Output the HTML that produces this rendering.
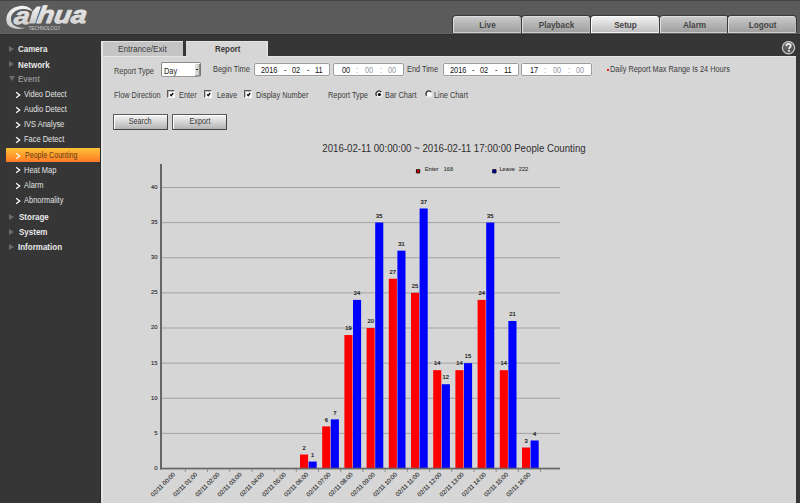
<!DOCTYPE html>
<html><head><meta charset="utf-8">
<style>
*{margin:0;padding:0;box-sizing:border-box}
html,body{width:800px;height:503px;overflow:hidden;background:#363636;font-family:"Liberation Sans",sans-serif}
.a{position:absolute;white-space:nowrap;line-height:1}
#hdr{position:absolute;left:0;top:0;width:800px;height:34px;background:#5b5b5b;border-top:1px solid #444;box-shadow:inset 0 -1px 0 #646464,0 1px 0 #2c2c2c}
.mt{position:absolute;top:15px;height:18px;width:70px;border-radius:4px 4px 0 0;background:linear-gradient(#cbcbcb,#9d9d9d);border:1px solid #393939;border-bottom:none;box-shadow:inset 1px 1px 0 #dedede,inset -1px 0 0 #b8b8b8,inset 0 -1px 0 #cfcfcf;font-weight:bold;font-size:8.2px;color:#454545;text-align:center;line-height:20px;padding-left:1px}
.mt.on{background:linear-gradient(#f4f4f4,#bdbdbd);box-shadow:inset 1px 1px 0 #fff,inset -1px 0 0 #ddd,inset 0 -1px 0 #f4f4f4}
.side{color:#e8e8e8;font-weight:bold;font-size:8.3px;transform:scaleX(0.965);transform-origin:0 0}
.sub{color:#e2e2e2;font-size:8.3px;transform:scaleX(0.9);transform-origin:0 0}
.tri{position:absolute;width:0;height:0;border-top:3px solid transparent;border-bottom:3px solid transparent;border-left:5px solid #6c6c6c}
.chev{position:absolute;width:4px;height:4px;border-right:1.3px solid #eee;border-top:1.3px solid #eee;transform:rotate(45deg)}
#panel{position:absolute;left:101px;top:56px;width:695px;height:447px;background:#d6d6d6;border-left:2px solid #e4e4e4;border-top:1px solid #e4e4e4;box-shadow:-1px 0 0 #2a2a2a}
.lbl{font-size:8.3px;color:#3c3c3c;transform:scaleX(0.887);transform-origin:0 0}
.box{position:absolute;background:#fff;border:1px solid #9c9c9c;border-radius:2px;box-shadow:0 0 0 0.5px #e2e2e2}
.cb{position:absolute;width:8px;height:8px;background:#fff;border-top:1.6px solid #5a5a5a;border-left:1.6px solid #5a5a5a;border-right:1px solid #f8f8f8;border-bottom:1px solid #f8f8f8;box-shadow:inset 1px 1px 0 #bbb}
.btn{position:absolute;height:16px;width:54.5px;border:1px solid #5a5a5a;border-right-color:#444;border-bottom-color:#444;border-radius:1px;background:linear-gradient(#f6f6f6,#b4b4b4);box-shadow:inset 1px 1px 0 #fff;font-size:8.3px;color:#3a3a3a;text-align:center;line-height:13.2px}
.btn span{display:inline-block;transform:scaleX(0.87)}
</style></head><body>
<div id="hdr"></div>
<!-- logo -->
<svg class="a" style="left:0;top:0" width="100" height="33" viewBox="0 0 100 33">
  <defs><linearGradient id="lg" x1="0" y1="0" x2="0" y2="1"><stop offset="0" stop-color="#f4f4f4"/><stop offset="1" stop-color="#c9c9c9"/></linearGradient></defs>
  <path d="M26 27.6 C22 29.6,13.5 29.8,9 26 C5.5 23,5.6 16.5,8.6 12.3 C12 7.6,18.5 5.6,24 5.9 C28.2 6.2,31.2 8.3,32.6 11.4 C30 9.9,27 8.8,23 8.9 C17.5 9,12.6 11.8,11.2 16.5 C10 21,12.2 24.8,16.2 26.6 C19.5 27.9,23.2 28,26 27.6 Z" fill="url(#lg)"/>
  <g transform="translate(0,23.6) skewX(-8)"><text x="13.3" y="0" font-family="Liberation Sans" font-weight="bold" font-style="italic" font-size="23.5" fill="url(#lg)" stroke="#e2e2e2" stroke-width="0.6" stroke-linejoin="round" textLength="15.6" lengthAdjust="spacingAndGlyphs">a</text></g>
  <path d="M36.9 6.4 L40.8 6.4 L35.1 23.6 L28.8 23.6 C30.5 18,31.8 13.5,32.6 11.2 Z" fill="url(#lg)"/>
  <g transform="translate(36.2,23.4) skewX(-9)"><text x="0" y="0" font-family="Liberation Sans" font-weight="bold" font-style="italic" font-size="24.3" fill="url(#lg)" stroke="#e0e0e0" stroke-width="0.9" stroke-linejoin="round" textLength="49.5" lengthAdjust="spacingAndGlyphs">hua</text></g>
  <text x="28.5" y="29.7" font-family="Liberation Sans" font-size="4.9" fill="#cfcfcf" textLength="32" lengthAdjust="spacingAndGlyphs">TECHNOLOGY</text>
</svg>
<div class="mt" style="left:452px">Live</div>
<div class="mt" style="left:521px">Playback</div>
<div class="mt on" style="left:590px">Setup</div>
<div class="mt" style="left:659px">Alarm</div>
<div class="mt" style="left:727px">Logout</div>

<!-- sidebar -->
<div class="tri" style="left:9px;top:46.0px"></div><div class="a side" style="left:18px;top:45.2px">Camera</div>
<div class="tri" style="left:9px;top:61.0px"></div><div class="a side" style="left:18px;top:60.5px">Network</div>
<div class="a" style="left:9px;top:75.8px;width:0;height:0;border-left:3.1px solid transparent;border-right:3.1px solid transparent;border-top:5.6px solid #6c6c6c"></div><div class="a side" style="left:18px;top:75.2px;color:#8e8e8e">Event</div>
<svg class="a" style="left:14px;top:90.75px" width="8" height="8" viewBox="0 0 8 8"><path d="M2.1 1.3 L5.7 4 L2.1 6.7" stroke="#ffffff" stroke-width="1.25" fill="none"/></svg><div class="a sub" style="left:24.4px;top:90.0px">Video Detect</div>
<svg class="a" style="left:14px;top:105.65px" width="8" height="8" viewBox="0 0 8 8"><path d="M2.1 1.3 L5.7 4 L2.1 6.7" stroke="#ffffff" stroke-width="1.25" fill="none"/></svg><div class="a sub" style="left:24.4px;top:104.9px">Audio Detect</div>
<svg class="a" style="left:14px;top:120.95px" width="8" height="8" viewBox="0 0 8 8"><path d="M2.1 1.3 L5.7 4 L2.1 6.7" stroke="#ffffff" stroke-width="1.25" fill="none"/></svg><div class="a sub" style="left:24.4px;top:120.2px">IVS Analyse</div>
<svg class="a" style="left:14px;top:135.95px" width="8" height="8" viewBox="0 0 8 8"><path d="M2.1 1.3 L5.7 4 L2.1 6.7" stroke="#ffffff" stroke-width="1.25" fill="none"/></svg><div class="a sub" style="left:24.4px;top:135.2px">Face Detect</div>
<div class="a" style="left:6px;top:148px;width:94px;height:14px;background:linear-gradient(#ffc236,#ff7a26)"></div>
<svg class="a" style="left:14px;top:151.85px" width="8" height="8" viewBox="0 0 8 8"><path d="M2.1 1.3 L5.7 4 L2.1 6.7" stroke="#fff6e8" stroke-width="1.25" fill="none"/></svg><div class="a sub" style="left:24.7px;top:151.1px;color:#5a3a12;transform:scaleX(0.855)">People Counting</div>
<svg class="a" style="left:14px;top:166.45px" width="8" height="8" viewBox="0 0 8 8"><path d="M2.1 1.3 L5.7 4 L2.1 6.7" stroke="#ffffff" stroke-width="1.25" fill="none"/></svg><div class="a sub" style="left:24.4px;top:165.8px">Heat Map</div>
<svg class="a" style="left:14px;top:181.75px" width="8" height="8" viewBox="0 0 8 8"><path d="M2.1 1.3 L5.7 4 L2.1 6.7" stroke="#ffffff" stroke-width="1.25" fill="none"/></svg><div class="a sub" style="left:24.4px;top:181.0px">Alarm</div>
<svg class="a" style="left:14px;top:197.05px" width="8" height="8" viewBox="0 0 8 8"><path d="M2.1 1.3 L5.7 4 L2.1 6.7" stroke="#ffffff" stroke-width="1.25" fill="none"/></svg><div class="a sub" style="left:24.4px;top:196.3px">Abnormality</div>
<div class="tri" style="left:9px;top:213.5px"></div><div class="a side" style="left:18.5px;top:213.0px">Storage</div>
<div class="tri" style="left:9px;top:228.5px"></div><div class="a side" style="left:18.5px;top:228.0px">System</div>
<div class="tri" style="left:9px;top:243.5px"></div><div class="a side" style="left:18px;top:242.7px">Information</div>

<!-- panel -->
<div id="panel"></div>
<div class="a" style="left:101px;top:41px;width:82px;height:15px;background:#c4c4c4;border-top:1px solid #e2e2e2;border-left:2px solid #e4e4e4"></div>
<div class="a lbl" style="left:118px;top:45.6px;font-size:8.2px;transform:none">Entrance/Exit</div>
<div class="a" style="left:185.5px;top:41px;width:82.5px;height:16px;background:#d6d6d6;border-top:1px solid #e4e4e4;box-shadow:inset -1.5px 0 0 #e2e2e2"></div>
<div class="a" style="left:214.5px;top:44.9px;font-size:8.3px;font-weight:bold;color:#3a3a3a;transform:scaleX(0.95);transform-origin:0 0">Report</div>

<!-- help -->
<svg class="a" style="left:781px;top:41px" width="15" height="15" viewBox="0 0 15 15">
  <defs><radialGradient id="hg" cx="0.4" cy="0.35" r="0.7"><stop offset="0" stop-color="#6e6e6e"/><stop offset="1" stop-color="#4a4a4a"/></radialGradient></defs>
  <circle cx="7.5" cy="6.7" r="6.1" fill="url(#hg)" stroke="#bdbdbd" stroke-width="1.4"/>
  <path d="M5.3 5.1 C5.3 3.6,6.3 2.9,7.6 2.9 C8.9 2.9,9.8 3.7,9.8 4.9 C9.8 6.2,8 6.5,8 7.9" stroke="#f2f2f2" stroke-width="1.6" fill="none"/>
  <rect x="7.1" y="9" width="1.8" height="1.7" fill="#f2f2f2"/>
</svg>
<!-- row1 -->
<div class="a lbl" style="left:113.5px;top:67.3px">Report Type</div>
<div class="a" style="left:161px;top:62px;width:40px;height:14.5px;background:#fff;border:1px solid #8a8a8a;border-right-color:#777;border-bottom-color:#999;border-radius:2px"></div>
<div class="a" style="left:194.8px;top:63.5px;width:5px;height:12px;background:linear-gradient(90deg,#e2e0da,#cfccc4);border-right:1px solid #888;border-bottom:1px solid #999"></div>
<div class="a" style="left:196.3px;top:68.8px;width:2px;height:1.6px;background:#000;border-radius:1px"></div>
<div class="a lbl" style="left:163.8px;top:67.3px;color:#222">Day</div>
<div class="a lbl" style="left:213px;top:64.9px">Begin Time</div>
<div class="box" style="left:254.4px;top:63.2px;width:76px;height:13.3px"></div>
<div class="a lbl" style="left:261px;top:65.7px;color:#111">2016</div>
<div class="a lbl" style="left:283.5px;top:65.7px;color:#111">-</div>
<div class="a lbl" style="left:291.7px;top:65.7px;color:#111">02</div>
<div class="a lbl" style="left:307px;top:65.7px;color:#111">-</div>
<div class="a lbl" style="left:315.3px;top:65.7px;color:#111">11</div>
<div class="box" style="left:333px;top:63.2px;width:71px;height:13.3px"></div>
<div class="a lbl" style="left:341.7px;top:65.7px;color:#111">00</div>
<div class="a lbl" style="left:356px;top:65.7px;color:#8e98a2">:</div>
<div class="a lbl" style="left:364.5px;top:65.7px;color:#8e98a2">00</div>
<div class="a lbl" style="left:379.7px;top:65.7px;color:#8e98a2">:</div>
<div class="a lbl" style="left:388.3px;top:65.7px;color:#8e98a2">00</div>
<div class="a lbl" style="left:407px;top:64.9px">End Time</div>
<div class="box" style="left:442.5px;top:63.2px;width:76.3px;height:13.3px"></div>
<div class="a lbl" style="left:449.5px;top:65.7px;color:#111">2016</div>
<div class="a lbl" style="left:471.8px;top:65.7px;color:#111">-</div>
<div class="a lbl" style="left:479.8px;top:65.7px;color:#111">02</div>
<div class="a lbl" style="left:495px;top:65.7px;color:#111">-</div>
<div class="a lbl" style="left:503.5px;top:65.7px;color:#111">11</div>
<div class="box" style="left:521.2px;top:63.2px;width:71.3px;height:13.3px"></div>
<div class="a lbl" style="left:530.4px;top:65.7px;color:#111">17</div>
<div class="a lbl" style="left:544.2px;top:65.7px;color:#8e98a2">:</div>
<div class="a lbl" style="left:552.8px;top:65.7px;color:#8e98a2">00</div>
<div class="a lbl" style="left:568px;top:65.7px;color:#8e98a2">:</div>
<div class="a lbl" style="left:576.3px;top:65.7px;color:#8e98a2">00</div>
<div class="a" style="left:607px;top:69px;width:2px;height:1.5px;background:#e02020"></div>
<div class="a lbl" style="left:609.6px;top:64.7px">Daily Report Max Range Is 24 Hours</div>
<!-- row2 -->
<div class="a lbl" style="left:113.5px;top:90.6px">Flow Direction</div>
<div class="cb" style="left:167px;top:90px"></div><svg class="a" style="left:167px;top:90px" width="8" height="8"><path d="M3.1 4.4 L4.2 5.7 L6.2 3.0" stroke="#000" stroke-width="1.3" fill="none"/></svg>
<div class="a lbl" style="left:178.7px;top:90.6px">Enter</div>
<div class="cb" style="left:204px;top:90px"></div><svg class="a" style="left:204px;top:90px" width="8" height="8"><path d="M3.1 4.4 L4.2 5.7 L6.2 3.0" stroke="#000" stroke-width="1.3" fill="none"/></svg>
<div class="a lbl" style="left:216.5px;top:90.6px">Leave</div>
<div class="cb" style="left:244px;top:90px"></div><svg class="a" style="left:244px;top:90px" width="8" height="8"><path d="M3.1 4.4 L4.2 5.7 L6.2 3.0" stroke="#000" stroke-width="1.3" fill="none"/></svg>
<div class="a lbl" style="left:256.3px;top:90.6px">Display Number</div>
<div class="a lbl" style="left:327.5px;top:90.6px">Report Type</div>
<svg class="a" style="left:374px;top:89px" width="10" height="10" viewBox="0 0 10 10"><circle cx="5.3" cy="5.4" r="3.4" fill="#e8e8e8"/><circle cx="5.3" cy="5.4" r="2.4" fill="#fff"/><path d="M2.7 6.8 A2.75 2.75 0 0 1 7.3 3.2" stroke="#2a2a2a" stroke-width="1.3" fill="none"/><circle cx="5.4" cy="5.5" r="1.6" fill="#000"/></svg>
<div class="a lbl" style="left:384.8px;top:90.6px">Bar Chart</div>
<svg class="a" style="left:423.5px;top:89px" width="10" height="10" viewBox="0 0 10 10"><circle cx="5.2" cy="5.25" r="3.4" fill="#e8e8e8"/><circle cx="5.2" cy="5.25" r="2.3" fill="#fff"/><path d="M2.6 6.65 A2.75 2.75 0 0 1 7.2 3.05" stroke="#2a2a2a" stroke-width="1.3" fill="none"/></svg>
<div class="a lbl" style="left:433.8px;top:90.6px">Line Chart</div>
<!-- row3 -->
<div class="btn" style="left:113px;top:114px"><span>Search</span></div>
<div class="btn" style="left:172.3px;top:114px"><span>Export</span></div>

<!-- chart -->
<svg class="a" style="left:0;top:0" width="800" height="503" viewBox="0 0 800 503" font-family="Liberation Sans" stroke-linejoin="round">
<g transform="translate(322.3,151.9) scale(0.94,1)"><text x="0" y="0" font-size="10.3" fill="#2e2e2e">2016-02-11 00:00:00 ~ 2016-02-11 17:00:00 People Counting</text></g>
<rect x="416.4" y="169.7" width="3.3" height="3.2" fill="#e00" stroke="#1a0808" stroke-width="1"/>
<text x="424.7" y="171.1" font-size="5.7" fill="#3c3c3c" stroke="#3c3c3c" stroke-width="0.12">Enter</text><text x="443.7" y="171.1" font-size="5.7" fill="#3c3c3c" stroke="#3c3c3c" stroke-width="0.12">168</text>
<rect x="492.7" y="169.7" width="3.3" height="3.2" fill="#00d" stroke="#08081a" stroke-width="1"/>
<text x="499.4" y="171.1" font-size="5.7" fill="#3c3c3c" stroke="#3c3c3c" stroke-width="0.12">Leave</text><text x="518.8" y="171.1" font-size="5.7" fill="#3c3c3c" stroke="#3c3c3c" stroke-width="0.12">222</text>
<rect x="162" y="432.88" width="398" height="1" fill="#a3a3a3"/>
<rect x="162" y="397.75" width="398" height="1" fill="#a3a3a3"/>
<rect x="162" y="362.62" width="398" height="1" fill="#a3a3a3"/>
<rect x="162" y="327.50" width="398" height="1" fill="#a3a3a3"/>
<rect x="162" y="292.38" width="398" height="1" fill="#a3a3a3"/>
<rect x="162" y="257.25" width="398" height="1" fill="#a3a3a3"/>
<rect x="162" y="222.12" width="398" height="1" fill="#a3a3a3"/>
<rect x="162" y="187.00" width="398" height="1" fill="#a3a3a3"/>
<text x="157.6" y="469.90" font-size="5.9" fill="#333" stroke="#333" stroke-width="0.15" text-anchor="end">0</text>
<text x="157.6" y="434.77" font-size="5.9" fill="#333" stroke="#333" stroke-width="0.15" text-anchor="end">5</text>
<text x="157.6" y="399.65" font-size="5.9" fill="#333" stroke="#333" stroke-width="0.15" text-anchor="end">10</text>
<text x="157.6" y="364.52" font-size="5.9" fill="#333" stroke="#333" stroke-width="0.15" text-anchor="end">15</text>
<text x="157.6" y="329.40" font-size="5.9" fill="#333" stroke="#333" stroke-width="0.15" text-anchor="end">20</text>
<text x="157.6" y="294.27" font-size="5.9" fill="#333" stroke="#333" stroke-width="0.15" text-anchor="end">25</text>
<text x="157.6" y="259.15" font-size="5.9" fill="#333" stroke="#333" stroke-width="0.15" text-anchor="end">30</text>
<text x="157.6" y="224.03" font-size="5.9" fill="#333" stroke="#333" stroke-width="0.15" text-anchor="end">35</text>
<text x="157.6" y="188.90" font-size="5.9" fill="#333" stroke="#333" stroke-width="0.15" text-anchor="end">40</text>
<rect x="300.00" y="454.54" width="8.1" height="14.06" fill="#ff0000"/>
<text x="304.05" y="449.74" font-size="5.8" fill="#1a1a1a" stroke="#1a1a1a" stroke-width="0.2" text-anchor="middle">2</text>
<rect x="308.60" y="461.57" width="8.1" height="7.03" fill="#0000ff"/>
<text x="312.65" y="456.77" font-size="5.8" fill="#1a1a1a" stroke="#1a1a1a" stroke-width="0.2" text-anchor="middle">1</text>
<rect x="322.20" y="426.42" width="8.1" height="42.18" fill="#ff0000"/>
<text x="326.25" y="421.62" font-size="5.8" fill="#1a1a1a" stroke="#1a1a1a" stroke-width="0.2" text-anchor="middle">6</text>
<rect x="330.80" y="419.39" width="8.1" height="49.21" fill="#0000ff"/>
<text x="334.85" y="414.59" font-size="5.8" fill="#1a1a1a" stroke="#1a1a1a" stroke-width="0.2" text-anchor="middle">7</text>
<rect x="344.40" y="335.03" width="8.1" height="133.57" fill="#ff0000"/>
<text x="348.45" y="330.23" font-size="5.8" fill="#1a1a1a" stroke="#1a1a1a" stroke-width="0.2" text-anchor="middle">19</text>
<rect x="353.00" y="299.88" width="8.1" height="168.72" fill="#0000ff"/>
<text x="357.05" y="295.08" font-size="5.8" fill="#1a1a1a" stroke="#1a1a1a" stroke-width="0.2" text-anchor="middle">24</text>
<rect x="366.60" y="328.00" width="8.1" height="140.60" fill="#ff0000"/>
<text x="370.65" y="323.20" font-size="5.8" fill="#1a1a1a" stroke="#1a1a1a" stroke-width="0.2" text-anchor="middle">20</text>
<rect x="375.20" y="222.55" width="8.1" height="246.05" fill="#0000ff"/>
<text x="379.25" y="217.75" font-size="5.8" fill="#1a1a1a" stroke="#1a1a1a" stroke-width="0.2" text-anchor="middle">35</text>
<rect x="388.80" y="278.79" width="8.1" height="189.81" fill="#ff0000"/>
<text x="392.85" y="273.99" font-size="5.8" fill="#1a1a1a" stroke="#1a1a1a" stroke-width="0.2" text-anchor="middle">27</text>
<rect x="397.40" y="250.67" width="8.1" height="217.93" fill="#0000ff"/>
<text x="401.45" y="245.87" font-size="5.8" fill="#1a1a1a" stroke="#1a1a1a" stroke-width="0.2" text-anchor="middle">31</text>
<rect x="411.00" y="292.85" width="8.1" height="175.75" fill="#ff0000"/>
<text x="415.05" y="288.05" font-size="5.8" fill="#1a1a1a" stroke="#1a1a1a" stroke-width="0.2" text-anchor="middle">25</text>
<rect x="419.60" y="208.49" width="8.1" height="260.11" fill="#0000ff"/>
<text x="423.65" y="203.69" font-size="5.8" fill="#1a1a1a" stroke="#1a1a1a" stroke-width="0.2" text-anchor="middle">37</text>
<rect x="433.20" y="370.18" width="8.1" height="98.42" fill="#ff0000"/>
<text x="437.25" y="365.38" font-size="5.8" fill="#1a1a1a" stroke="#1a1a1a" stroke-width="0.2" text-anchor="middle">14</text>
<rect x="441.80" y="384.24" width="8.1" height="84.36" fill="#0000ff"/>
<text x="445.85" y="379.44" font-size="5.8" fill="#1a1a1a" stroke="#1a1a1a" stroke-width="0.2" text-anchor="middle">12</text>
<rect x="455.40" y="370.18" width="8.1" height="98.42" fill="#ff0000"/>
<text x="459.45" y="365.38" font-size="5.8" fill="#1a1a1a" stroke="#1a1a1a" stroke-width="0.2" text-anchor="middle">14</text>
<rect x="464.00" y="363.15" width="8.1" height="105.45" fill="#0000ff"/>
<text x="468.05" y="358.35" font-size="5.8" fill="#1a1a1a" stroke="#1a1a1a" stroke-width="0.2" text-anchor="middle">15</text>
<rect x="477.60" y="299.88" width="8.1" height="168.72" fill="#ff0000"/>
<text x="481.65" y="295.08" font-size="5.8" fill="#1a1a1a" stroke="#1a1a1a" stroke-width="0.2" text-anchor="middle">24</text>
<rect x="486.20" y="222.55" width="8.1" height="246.05" fill="#0000ff"/>
<text x="490.25" y="217.75" font-size="5.8" fill="#1a1a1a" stroke="#1a1a1a" stroke-width="0.2" text-anchor="middle">35</text>
<rect x="499.80" y="370.18" width="8.1" height="98.42" fill="#ff0000"/>
<text x="503.85" y="365.38" font-size="5.8" fill="#1a1a1a" stroke="#1a1a1a" stroke-width="0.2" text-anchor="middle">14</text>
<rect x="508.40" y="320.97" width="8.1" height="147.63" fill="#0000ff"/>
<text x="512.45" y="316.17" font-size="5.8" fill="#1a1a1a" stroke="#1a1a1a" stroke-width="0.2" text-anchor="middle">21</text>
<rect x="522.00" y="447.51" width="8.1" height="21.09" fill="#ff0000"/>
<text x="526.05" y="442.71" font-size="5.8" fill="#1a1a1a" stroke="#1a1a1a" stroke-width="0.2" text-anchor="middle">3</text>
<rect x="530.60" y="440.48" width="8.1" height="28.12" fill="#0000ff"/>
<text x="534.65" y="435.68" font-size="5.8" fill="#1a1a1a" stroke="#1a1a1a" stroke-width="0.2" text-anchor="middle">4</text>
<rect x="160" y="164" width="2" height="305.5" fill="#666"/>
<rect x="160" y="467.7" width="400" height="1.7" fill="#666"/>
<rect x="184.75" y="469.3" width="1" height="2.6" fill="#888"/>
<rect x="206.96" y="469.3" width="1" height="2.6" fill="#888"/>
<rect x="229.17" y="469.3" width="1" height="2.6" fill="#888"/>
<rect x="251.38" y="469.3" width="1" height="2.6" fill="#888"/>
<rect x="273.59" y="469.3" width="1" height="2.6" fill="#888"/>
<rect x="295.80" y="469.3" width="1" height="2.6" fill="#888"/>
<rect x="318.01" y="469.3" width="1" height="2.6" fill="#888"/>
<rect x="340.22" y="469.3" width="1" height="2.6" fill="#888"/>
<rect x="362.43" y="469.3" width="1" height="2.6" fill="#888"/>
<rect x="384.64" y="469.3" width="1" height="2.6" fill="#888"/>
<rect x="406.85" y="469.3" width="1" height="2.6" fill="#888"/>
<rect x="429.06" y="469.3" width="1" height="2.6" fill="#888"/>
<rect x="451.27" y="469.3" width="1" height="2.6" fill="#888"/>
<rect x="473.48" y="469.3" width="1" height="2.6" fill="#888"/>
<rect x="495.69" y="469.3" width="1" height="2.6" fill="#888"/>
<rect x="517.90" y="469.3" width="1" height="2.6" fill="#888"/>
<rect x="540.11" y="469.3" width="1" height="2.6" fill="#888"/>
<text transform="translate(175.44,474.9) rotate(-45)" x="0" y="0" font-size="6.0" fill="#2a2a2a" stroke="#2a2a2a" stroke-width="0.1" text-anchor="end">02/11 00:00</text>
<text transform="translate(197.65,474.9) rotate(-45)" x="0" y="0" font-size="6.0" fill="#2a2a2a" stroke="#2a2a2a" stroke-width="0.1" text-anchor="end">02/11 01:00</text>
<text transform="translate(219.86,474.9) rotate(-45)" x="0" y="0" font-size="6.0" fill="#2a2a2a" stroke="#2a2a2a" stroke-width="0.1" text-anchor="end">02/11 02:00</text>
<text transform="translate(242.07,474.9) rotate(-45)" x="0" y="0" font-size="6.0" fill="#2a2a2a" stroke="#2a2a2a" stroke-width="0.1" text-anchor="end">02/11 03:00</text>
<text transform="translate(264.28,474.9) rotate(-45)" x="0" y="0" font-size="6.0" fill="#2a2a2a" stroke="#2a2a2a" stroke-width="0.1" text-anchor="end">02/11 04:00</text>
<text transform="translate(286.49,474.9) rotate(-45)" x="0" y="0" font-size="6.0" fill="#2a2a2a" stroke="#2a2a2a" stroke-width="0.1" text-anchor="end">02/11 05:00</text>
<text transform="translate(308.70,474.9) rotate(-45)" x="0" y="0" font-size="6.0" fill="#2a2a2a" stroke="#2a2a2a" stroke-width="0.1" text-anchor="end">02/11 06:00</text>
<text transform="translate(330.91,474.9) rotate(-45)" x="0" y="0" font-size="6.0" fill="#2a2a2a" stroke="#2a2a2a" stroke-width="0.1" text-anchor="end">02/11 07:00</text>
<text transform="translate(353.12,474.9) rotate(-45)" x="0" y="0" font-size="6.0" fill="#2a2a2a" stroke="#2a2a2a" stroke-width="0.1" text-anchor="end">02/11 08:00</text>
<text transform="translate(375.33,474.9) rotate(-45)" x="0" y="0" font-size="6.0" fill="#2a2a2a" stroke="#2a2a2a" stroke-width="0.1" text-anchor="end">02/11 09:00</text>
<text transform="translate(397.54,474.9) rotate(-45)" x="0" y="0" font-size="6.0" fill="#2a2a2a" stroke="#2a2a2a" stroke-width="0.1" text-anchor="end">02/11 10:00</text>
<text transform="translate(419.75,474.9) rotate(-45)" x="0" y="0" font-size="6.0" fill="#2a2a2a" stroke="#2a2a2a" stroke-width="0.1" text-anchor="end">02/11 11:00</text>
<text transform="translate(441.96,474.9) rotate(-45)" x="0" y="0" font-size="6.0" fill="#2a2a2a" stroke="#2a2a2a" stroke-width="0.1" text-anchor="end">02/11 12:00</text>
<text transform="translate(464.17,474.9) rotate(-45)" x="0" y="0" font-size="6.0" fill="#2a2a2a" stroke="#2a2a2a" stroke-width="0.1" text-anchor="end">02/11 13:00</text>
<text transform="translate(486.38,474.9) rotate(-45)" x="0" y="0" font-size="6.0" fill="#2a2a2a" stroke="#2a2a2a" stroke-width="0.1" text-anchor="end">02/11 14:00</text>
<text transform="translate(508.59,474.9) rotate(-45)" x="0" y="0" font-size="6.0" fill="#2a2a2a" stroke="#2a2a2a" stroke-width="0.1" text-anchor="end">02/11 15:00</text>
<text transform="translate(530.80,474.9) rotate(-45)" x="0" y="0" font-size="6.0" fill="#2a2a2a" stroke="#2a2a2a" stroke-width="0.1" text-anchor="end">02/11 16:00</text>
</svg>
<!-- /chart -->
</body></html>
